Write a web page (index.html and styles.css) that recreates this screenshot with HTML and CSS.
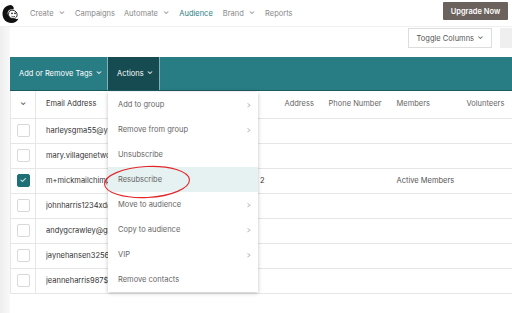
FILE: index.html
```html
<!DOCTYPE html>
<html lang="en">
<head>
    <meta charset="UTF-8">
    <title>Audience</title>
    <link rel="stylesheet" href="styles.css">
</head>
<body>
    <header class="topnav">
        <svg class="logo" width="20" height="20" viewBox="0 0 20 20">
            <path d="M10 1C5 1 1.5 4.5 1.5 10c0 5 3.8 9 8.8 9 3.6 0 6.3-2 7.2-4.6-1.2.6-3 .8-4.3.1-1.8.4-4-.4-4.8-2.3C7 11 6 9.5 7 7.5 8 5.5 10.5 5 12.5 5.6c.6-1.8.2-3.5-2.5-4.6z" fill="#111"/>
            <path d="M8.5 7c1.8-1.3 5-1 6.6 1 1.2 1.4 1.3 3.6.4 5-1 1.4-3 1.9-4.6 1.4C9 14 7.5 12.6 7.5 10.6c0-1.3.3-2.8 1-3.6z" fill="#fff" stroke="#111" stroke-width=".9"/>
            <circle cx="11" cy="9.4" r=".8" fill="#111"/>
            <circle cx="14" cy="9.4" r=".8" fill="#111"/>
            <path d="M10.5 12.2c1 .8 2.6.8 3.5 0" fill="none" stroke="#111" stroke-width=".8"/>
        </svg>
        <nav class="menu">
            <a>Create <span class="caret">&#8964;</span></a>
            <a>Campaigns</a>
            <a>Automate <span class="caret">&#8964;</span></a>
            <a class="current">Audience</a>
            <a>Brand <span class="caret">&#8964;</span></a>
            <a>Reports</a>
        </nav>
        <button class="upgrade">Upgrade Now</button>
    </header>

    <div class="page">
        <div class="side"></div>
        <div class="content">
            <div class="toolbar">
                <button class="toggle">Toggle Columns <span class="caret">&#8964;</span></button>
                <button class="ghost"></button>
            </div>

            <div class="bulkbar">
                <button class="bulk">Add or Remove Tags <span class="caret">&#8964;</span></button>
                <button class="bulk open">Actions <span class="caret">&#8964;</span></button>
            </div>

            <div class="table-wrap">
                <table class="contacts">
                    <colgroup>
                        <col class="c-check">
                        <col class="c-email">
                        <col class="c-addr">
                        <col class="c-phone">
                        <col class="c-members">
                        <col class="c-vol">
                    </colgroup>
                    <thead>
                        <tr>
                            <th class="sel"><span class="caret">&#8964;</span></th>
                            <th>Email Address</th>
                            <th>Address</th>
                            <th>Phone Number</th>
                            <th>Members</th>
                            <th>Volunteers</th>
                        </tr>
                    </thead>
                    <tbody>
                        <tr><td class="sel"><span class="box"></span></td><td class="email"><span class="addr">harleysgma55@yahoo.com</span></td><td></td><td></td><td></td><td></td></tr>
                        <tr><td class="sel"><span class="box"></span></td><td class="email"><span class="addr">mary.villagenetwork@gmail.com</span></td><td></td><td></td><td></td><td></td></tr>
                        <tr><td class="sel"><span class="box checked">&#10003;</span></td><td class="email"><span class="addr">m+mickmailchimp@gmail.com</span><span class="extra">2</span></td><td></td><td></td><td>Active Members</td><td></td></tr>
                        <tr><td class="sel"><span class="box"></span></td><td class="email"><span class="addr">johnharris1234xd@gmail.com</span></td><td></td><td></td><td></td><td></td></tr>
                        <tr><td class="sel"><span class="box"></span></td><td class="email"><span class="addr">andygcrawley@gmail.com</span></td><td></td><td></td><td></td><td></td></tr>
                        <tr><td class="sel"><span class="box"></span></td><td class="email"><span class="addr">jaynehansen3256@gmail.com</span></td><td></td><td></td><td></td><td></td></tr>
                        <tr><td class="sel"><span class="box"></span></td><td class="email"><span class="addr">jeanneharris987$@gmail.com</span></td><td></td><td></td><td></td><td></td></tr>
                    </tbody>
                </table>

                <ul class="dropdown">
                    <li>Add to group <span class="chev">&gt;</span></li>
                    <li>Remove from group <span class="chev">&gt;</span></li>
                    <li>Unsubscribe</li>
                    <li class="hover">Resubscribe</li>
                    <li>Move to audience <span class="chev">&gt;</span></li>
                    <li>Copy to audience <span class="chev">&gt;</span></li>
                    <li>VIP <span class="chev">&gt;</span></li>
                    <li>Remove contacts</li>
                </ul>

                <svg class="mark" width="100" height="40" viewBox="0 0 100 40">
                    <ellipse cx="49" cy="20" rx="42.5" ry="15.5" transform="rotate(-3 49 20)" fill="none" stroke="#e3262a" stroke-width="1.1"/>
                </svg>
            </div>
        </div>
    </div>
</body>
</html>
```
FILE: styles.css
```css
*{
    padding: 0;
    margin: 0;
    box-sizing: border-box;
}
body{
    width: 512px;
    height: 313px;
    overflow: hidden;
    background-color: #fff;
    font-family: Inter, "Liberation Sans", sans-serif;
    font-size: 7.5px;
    color: #555;
}
button{
    font-family: inherit;
    border: 0;
    background: none;
    white-space: nowrap;
}
.caret{
    display: inline-block;
    font-size: 8px;
    line-height: 1;
    transform: translateY(-2px);
    margin-left: 1px;
}

/* top navigation */
.topnav{
    height: 27px;
    display: flex;
    align-items: center;
    padding: 0 4px 0 1px;
    border-bottom: 1px solid #f0f0f0;
}
.logo{
    margin-top: 1px;
}
.menu{
    display: flex;
    margin-left: 9px;
}
.menu a{
    color: #888;
    margin-right: 10px;
}
.menu a:nth-child(2){
    margin-right: 9px;
}
.menu .caret{
    margin-left: 3px;
}
.menu a.current{
    color: #2a7c83;
}
.upgrade{
    margin-left: auto;
    width: 65px;
    height: 18px;
    margin-top: -4px;
    background-color: #6b625d;
    color: #fff;
    font-weight: 600;
    font-size: 7.5px;
    border-radius: 1px;
}

/* page */
.page{
    display: flex;
    height: 286px;
}
.side{
    width: 10px;
    background: linear-gradient(to right, #eeeeee, #f9f9f9);
}
.content{
    flex: 1;
    background-color: #fff;
}
.toolbar{
    height: 30px;
    display: flex;
    justify-content: flex-end;
    align-items: flex-start;
    padding-top: 1px;
}
.toggle{
    width: 84px;
    height: 20px;
    border: 1px solid #ddd;
    background-color: #fff;
    color: #555;
    font-size: 7.5px;
}
.ghost{
    width: 12px;
    height: 20px;
    margin-left: 8px;
    background-color: #efefef;
}

/* bulk action bar */
.bulkbar{
    height: 34px;
    display: flex;
    background-color: #287c84;
    border-bottom: 1px solid #1a5a61;
}
.bulk{
    height: 33px;
    color: #fff;
    font-size: 7.5px;
    padding: 0 9px;
    text-align: left;
    border-right: 1px solid #7fb3b8;
}
.bulk:first-child{
    width: 98px;
}
.bulk.open{
    width: 52px;
    background-color: #154b51;
}

/* contacts table */
.table-wrap{
    position: relative;
}
.contacts{
    width: 100%;
    table-layout: fixed;
    border-collapse: collapse;
    border-bottom: 1px solid #e6e6e6;
}
.c-check{ width: 25px; }
.c-email{ width: 241px; }
.c-addr{ width: 44px; }
.c-phone{ width: 68px; }
.c-members{ width: 70px; }
.contacts th,.contacts td{
    height: 25px;
    text-align: left;
    font-weight: 400;
    padding-left: 8px;
    border-bottom: 1px solid #e6e6e6;
    white-space: nowrap;
    overflow: hidden;
    color: #555;
}
.contacts th{
    height: 27px;
    padding-bottom: 2px;
    color: #666;
}
.contacts .sel{
    padding: 0;
    text-align: center;
    border-right: 1px solid #e6e6e6;
    border-left: 1px solid #e6e6e6;
}
.contacts th.sel .caret{
    color: #333;
    margin: 0;
}
.contacts th:nth-child(2),.contacts td.email{
    padding-left: 10px;
    color: #333;
}
.addr{
    display: inline-block;
    max-width: 62px;
    overflow: hidden;
    vertical-align: middle;
}
.extra{
    float: right;
    margin-right: 12px;
}
.box{
    display: inline-block;
    width: 13px;
    height: 13px;
    border: 1px solid #d9d9d9;
    border-radius: 2px;
    vertical-align: middle;
    line-height: 11px;
    font-size: 8px;
    color: #fff;
}
.box.checked{
    background-color: #1f6f77;
    border-color: #1f6f77;
}

/* actions menu */
.dropdown{
    position: absolute;
    left: 98px;
    top: 1px;
    width: 150px;
    list-style: none;
    background-color: #fff;
    box-shadow: 0 1px 4px rgba(0,0,0,.25);
}
.dropdown li{
    height: 25px;
    line-height: 26px;
    padding: 0 6px 0 10px;
    color: #666;
    display: flex;
    justify-content: space-between;
}
.dropdown li.hover{
    background-color: #e6f1f1;
}
.chev{
    color: #aaa;
    font-size: 8.5px;
    transform: scaleX(.7);
}
.mark{
    position: absolute;
    left: 88px;
    top: 71px;
}
```
